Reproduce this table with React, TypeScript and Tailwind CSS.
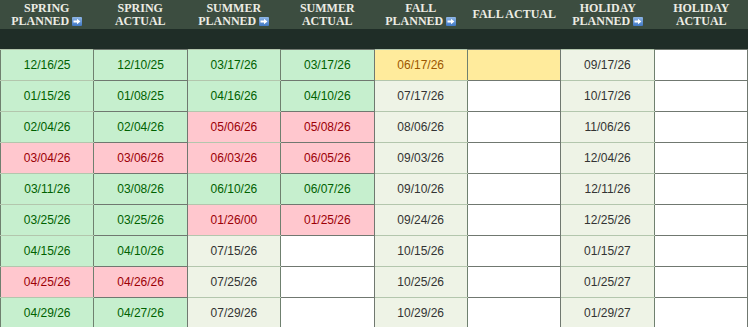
import React from "react";

type Kind = "G" | "R" | "Y" | "L" | "W";
type Cell = [string, Kind];

const rows: Cell[][] = [
  [["12/16/25","G"],["12/10/25","G"],["03/17/26","G"],["03/17/26","G"],["06/17/26","Y"],["","Y"],["09/17/26","L"],["","W"]],
  [["01/15/26","G"],["01/08/25","G"],["04/16/26","G"],["04/10/26","G"],["07/17/26","L"],["","W"],["10/17/26","L"],["","W"]],
  [["02/04/26","G"],["02/04/26","G"],["05/06/26","R"],["05/08/26","R"],["08/06/26","L"],["","W"],["11/06/26","L"],["","W"]],
  [["03/04/26","R"],["03/06/26","R"],["06/03/26","R"],["06/05/26","R"],["09/03/26","L"],["","W"],["12/04/26","L"],["","W"]],
  [["03/11/26","G"],["03/08/26","G"],["06/10/26","G"],["06/07/26","G"],["09/10/26","L"],["","W"],["12/11/26","L"],["","W"]],
  [["03/25/26","G"],["03/25/26","G"],["01/26/00","R"],["01/25/26","R"],["09/24/26","L"],["","W"],["12/25/26","L"],["","W"]],
  [["04/15/26","G"],["04/10/26","G"],["07/15/26","L"],["","W"],["10/15/26","L"],["","W"],["01/15/27","L"],["","W"]],
  [["04/25/26","R"],["04/26/26","R"],["07/25/26","L"],["","W"],["10/25/26","L"],["","W"],["01/25/27","L"],["","W"]],
  [["04/29/26","G"],["04/27/26","G"],["07/29/26","L"],["","W"],["10/29/26","L"],["","W"],["01/29/27","L"],["","W"]],
];

const kindClass: Record<Kind, string> = {
  G: "bg-[#c6efce] text-[#006100]",
  R: "bg-[#ffc7ce] text-[#9c0006]",
  Y: "bg-[#ffeb9c] text-[#9c5700]",
  L: "bg-[#eef3e6] text-[#333333]",
  W: "bg-white text-[#333333]",
};

const headers: { l1: string; l2?: string; arrow?: boolean }[] = [
  { l1: "SPRING", l2: "PLANNED", arrow: true },
  { l1: "SPRING", l2: "ACTUAL" },
  { l1: "SUMMER", l2: "PLANNED", arrow: true },
  { l1: "SUMMER", l2: "ACTUAL" },
  { l1: "FALL", l2: "PLANNED", arrow: true },
  { l1: "FALL ACTUAL" },
  { l1: "HOLIDAY", l2: "PLANNED", arrow: true },
  { l1: "HOLIDAY", l2: "ACTUAL" },
];

function Arrow() {
  return (
    <span className="ml-[3px] inline-flex h-[9px] w-[10px] items-center justify-center rounded-[1px] bg-gradient-to-b from-[#8fb6e6] to-[#3f78c4]">
      <svg width="8" height="7" viewBox="0 0 8 7">
        <path d="M0.5 2.5 H4 V0.8 L7.4 3.5 L4 6.2 V4.5 H0.5 Z" fill="#ffffff" />
      </svg>
    </span>
  );
}

export default function App() {
  return (
    <div className="w-[750px] h-[327px] overflow-hidden bg-white">
      <div className="w-[748px]">
        <div className="grid h-[29px] grid-cols-8 bg-[#3c4d40] text-[#ecece4]" style={{ fontFamily: '"Liberation Serif", "Times New Roman", serif' }}>
          {headers.map((h, i) => (
            <div key={i} className="flex flex-col items-center justify-center text-[12px] font-bold leading-[13px]">
              <div>{h.l1}</div>
              {h.l2 && (
                <div className="flex items-center">
                  {h.l2}
                  {h.arrow && <Arrow />}
                </div>
              )}
            </div>
          ))}
        </div>
        <div className="h-[20px] bg-[#1f2d27]" />
        <table className="w-[748px] table-fixed border-collapse" style={{ fontFamily: '"Liberation Sans", Arial, sans-serif' }}>
          <tbody>
            {rows.map((r, ri) => (
              <tr key={ri} className="h-[31px]">
                {r.map(([t, k], ci) => {
                  const planned = ci % 2 === 0;
                  const border = planned
                    ? "border-x border-x-[#6f806f] border-y border-y-[#b3c6ad]"
                    : "border border-[#707870]";
                  return (
                    <td key={ci} className={`${kindClass[k]} ${border} p-0 text-center text-[12px]`}>
                      {t}
                    </td>
                  );
                })}
              </tr>
            ))}
          </tbody>
        </table>
      </div>
    </div>
  );
}
